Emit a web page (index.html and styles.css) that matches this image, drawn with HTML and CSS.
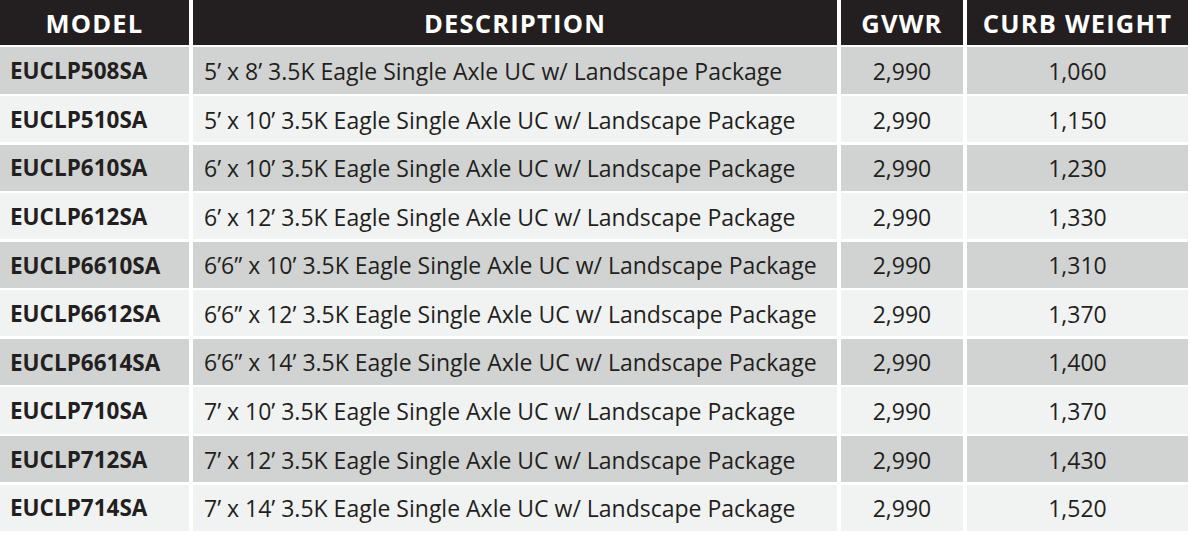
FILE: index.html
```html
<!DOCTYPE html>
<html>
<head>
<meta charset="utf-8">
<link rel="stylesheet" href="styles.css">
</head>
<body>
<div class="table">
  <div class="row head">
    <div class="cell model">MODEL</div>
    <div class="cell desc">DESCRIPTION</div>
    <div class="cell num">GVWR</div>
    <div class="cell num">CURB WEIGHT</div>
  </div>
  <div class="row odd"><div class="cell model">EUCLP508SA</div><div class="cell desc">5’ x 8’ 3.5K Eagle Single Axle UC w/ Landscape Package</div><div class="cell num">2,990</div><div class="cell num">1,060</div></div>
  <div class="row even"><div class="cell model">EUCLP510SA</div><div class="cell desc">5’ x 10’ 3.5K Eagle Single Axle UC w/ Landscape Package</div><div class="cell num">2,990</div><div class="cell num">1,150</div></div>
  <div class="row odd"><div class="cell model">EUCLP610SA</div><div class="cell desc">6’ x 10’ 3.5K Eagle Single Axle UC w/ Landscape Package</div><div class="cell num">2,990</div><div class="cell num">1,230</div></div>
  <div class="row even"><div class="cell model">EUCLP612SA</div><div class="cell desc">6’ x 12’ 3.5K Eagle Single Axle UC w/ Landscape Package</div><div class="cell num">2,990</div><div class="cell num">1,330</div></div>
  <div class="row odd"><div class="cell model">EUCLP6610SA</div><div class="cell desc">6’6” x 10’ 3.5K Eagle Single Axle UC w/ Landscape Package</div><div class="cell num">2,990</div><div class="cell num">1,310</div></div>
  <div class="row even"><div class="cell model">EUCLP6612SA</div><div class="cell desc">6’6” x 12’ 3.5K Eagle Single Axle UC w/ Landscape Package</div><div class="cell num">2,990</div><div class="cell num">1,370</div></div>
  <div class="row odd"><div class="cell model">EUCLP6614SA</div><div class="cell desc">6’6” x 14’ 3.5K Eagle Single Axle UC w/ Landscape Package</div><div class="cell num">2,990</div><div class="cell num">1,400</div></div>
  <div class="row even"><div class="cell model">EUCLP710SA</div><div class="cell desc">7’ x 10’ 3.5K Eagle Single Axle UC w/ Landscape Package</div><div class="cell num">2,990</div><div class="cell num">1,370</div></div>
  <div class="row odd"><div class="cell model">EUCLP712SA</div><div class="cell desc">7’ x 12’ 3.5K Eagle Single Axle UC w/ Landscape Package</div><div class="cell num">2,990</div><div class="cell num">1,430</div></div>
  <div class="row even"><div class="cell model">EUCLP714SA</div><div class="cell desc">7’ x 14’ 3.5K Eagle Single Axle UC w/ Landscape Package</div><div class="cell num">2,990</div><div class="cell num">1,520</div></div>
</div>
</body>
</html>
```
FILE: styles.css
```css
html, body {
  margin: 0;
  padding: 0;
  background: #ffffff;
}
body {
  font-family: "Open Sans", "Liberation Sans", sans-serif;
  color: #231f20;
}
.table {
  width: 1187px;
  display: flex;
  flex-direction: column;
  gap: 2.4px;
}
.row {
  display: grid;
  grid-template-columns: 189px 644px 122px 221px;
  column-gap: 4px;
  height: 46.2px;
}
.row.head {
  height: 45px;
}
.cell {
  display: flex;
  align-items: center;
  font-size: 23px;
  line-height: 1;
  padding-top: 2px;
  box-sizing: border-box;
  white-space: nowrap;
}
.odd .cell { background: #d1d3d2; }
.even .cell { background: #f1f2f2; }
.model {
  font-weight: 700;
  font-size: 22.5px;
  padding-left: 10px;
}
.desc {
  padding-left: 11px;
}
.num {
  justify-content: center;
}
.head .cell {
  background: #231f20;
  color: #ffffff;
  font-weight: 700;
  font-size: 25.5px;
  letter-spacing: 1.2px;
  justify-content: center;
  padding: 2px 0 0 0;
}
```
